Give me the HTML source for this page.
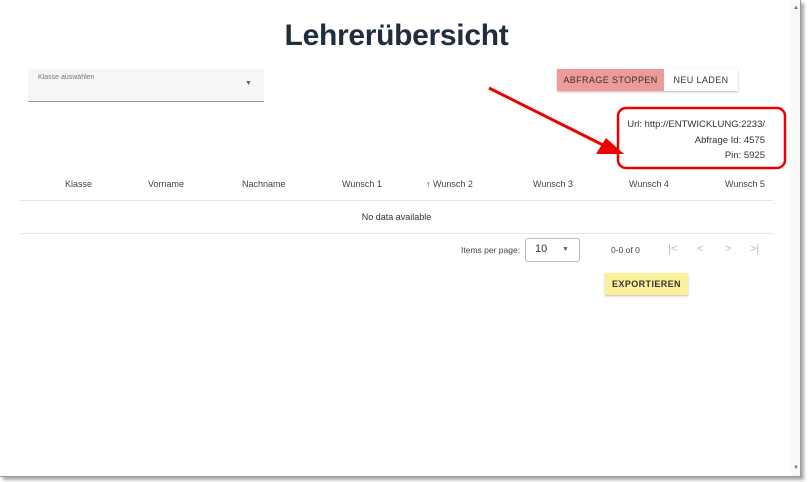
<!DOCTYPE html>
<html><head><meta charset="utf-8"><style>
*{margin:0;padding:0;box-sizing:border-box}
body{width:808px;height:482px;background:#fff;font-family:"Liberation Sans",Arial,sans-serif;position:relative;overflow:hidden;color:#333}
.win{position:absolute;left:0;top:0;width:801px;height:477px;background:#fff;border-right:1px solid #999;border-bottom:1px solid #999;box-shadow:3px 3px 3px #aaa}
.sb{position:absolute;left:791px;top:0;width:9px;height:476px;background:#f9f9f9}
.a{position:absolute;white-space:nowrap}
h1{position:absolute;left:0;width:793px;top:19px;text-align:center;font-size:30px;font-weight:bold;color:#1f2d3d;letter-spacing:-0.3px}
.sel{position:absolute;left:28px;top:69px;width:236px;height:33px;background:#f5f6f7;border-bottom:1px solid #999}
.btn{position:absolute;font-size:9px;letter-spacing:0.4px;text-align:center;line-height:22px;height:22px}
.th{position:absolute;top:179px;font-size:9px;color:#444}
.hr{position:absolute;left:20px;width:753px;height:1px;background:#e5e5e5}
</style></head><body>
<div class="win"></div>
<div class="sb"></div>
<div class="a" style="left:793px;top:5px;font-size:6px;color:#777">▲</div>
<div class="a" style="left:793px;top:465px;font-size:6px;color:#777">▼</div>
<h1>Lehrerübersicht</h1>
<div class="sel"></div>
<div class="a" style="left:38px;top:74px;font-size:7px;color:#777">Klasse auswählen</div>
<div class="a" style="left:245px;top:80px;font-size:7px;color:#666">▼</div>
<div class="btn" style="left:557px;top:69px;width:107px;background:#ee9a9a;color:#333;box-shadow:0 1px 2px #bbb">ABFRAGE STOPPEN</div>
<div class="btn" style="left:664px;top:69px;width:74px;background:#fff;color:#333;box-shadow:0 1px 2px #bbb">NEU LADEN</div>
<svg style="position:absolute;left:0;top:0" width="808" height="482">
<line x1="489" y1="88" x2="605" y2="146" stroke="#e00" stroke-width="3"/>
<polygon points="624,154 596,154 606,138" fill="#e00"/>
<rect x="618" y="108" width="167" height="60" rx="8" fill="none" stroke="#e00" stroke-width="2.5"/>
</svg>
<div class="a" style="right:43px;top:117px;font-size:9.5px;line-height:15.5px;text-align:right;color:#333">Url: http://ENTWICKLUNG:2233/<br>Abfrage Id: 4575<br>Pin: 5925</div>
<div class="th" style="left:65px">Klasse</div>
<div class="th" style="left:148px">Vorname</div>
<div class="th" style="left:242px">Nachname</div>
<div class="th" style="left:342px">Wunsch 1</div>
<div class="th" style="left:426px">↑ Wunsch 2</div>
<div class="th" style="left:533px">Wunsch 3</div>
<div class="th" style="left:629px">Wunsch 4</div>
<div class="th" style="left:725px">Wunsch 5</div>
<div class="hr" style="top:200px"></div>
<div class="a" style="left:0;width:793px;text-align:center;top:212px;font-size:9px;color:#333">No data available</div>
<div class="hr" style="top:233px"></div>
<div class="a" style="left:461px;top:245px;font-size:8.5px;color:#444">Items per page:</div>
<div class="a" style="left:525px;top:238px;width:55px;height:24px;border:1px solid #bbb;border-radius:3px"></div>
<div class="a" style="left:535px;top:243px;font-size:11px;color:#333">10</div>
<div class="a" style="left:562px;top:246px;font-size:7px;color:#666">▼</div>
<div class="a" style="left:611px;top:245px;font-size:8.5px;color:#444">0-0 of 0</div>
<div class="a" style="left:668px;top:243px;font-size:11px;color:#bbb">|&lt;</div>
<div class="a" style="left:697px;top:243px;font-size:11px;color:#bbb">&lt;</div>
<div class="a" style="left:725px;top:243px;font-size:11px;color:#bbb">&gt;</div>
<div class="a" style="left:750px;top:243px;font-size:11px;color:#bbb">&gt;|</div>
<div class="btn" style="left:605px;top:273px;width:83px;background:#fdf09a;color:#333;box-shadow:0 1px 2px #bbb;font-weight:bold">EXPORTIEREN</div>
</body></html>
